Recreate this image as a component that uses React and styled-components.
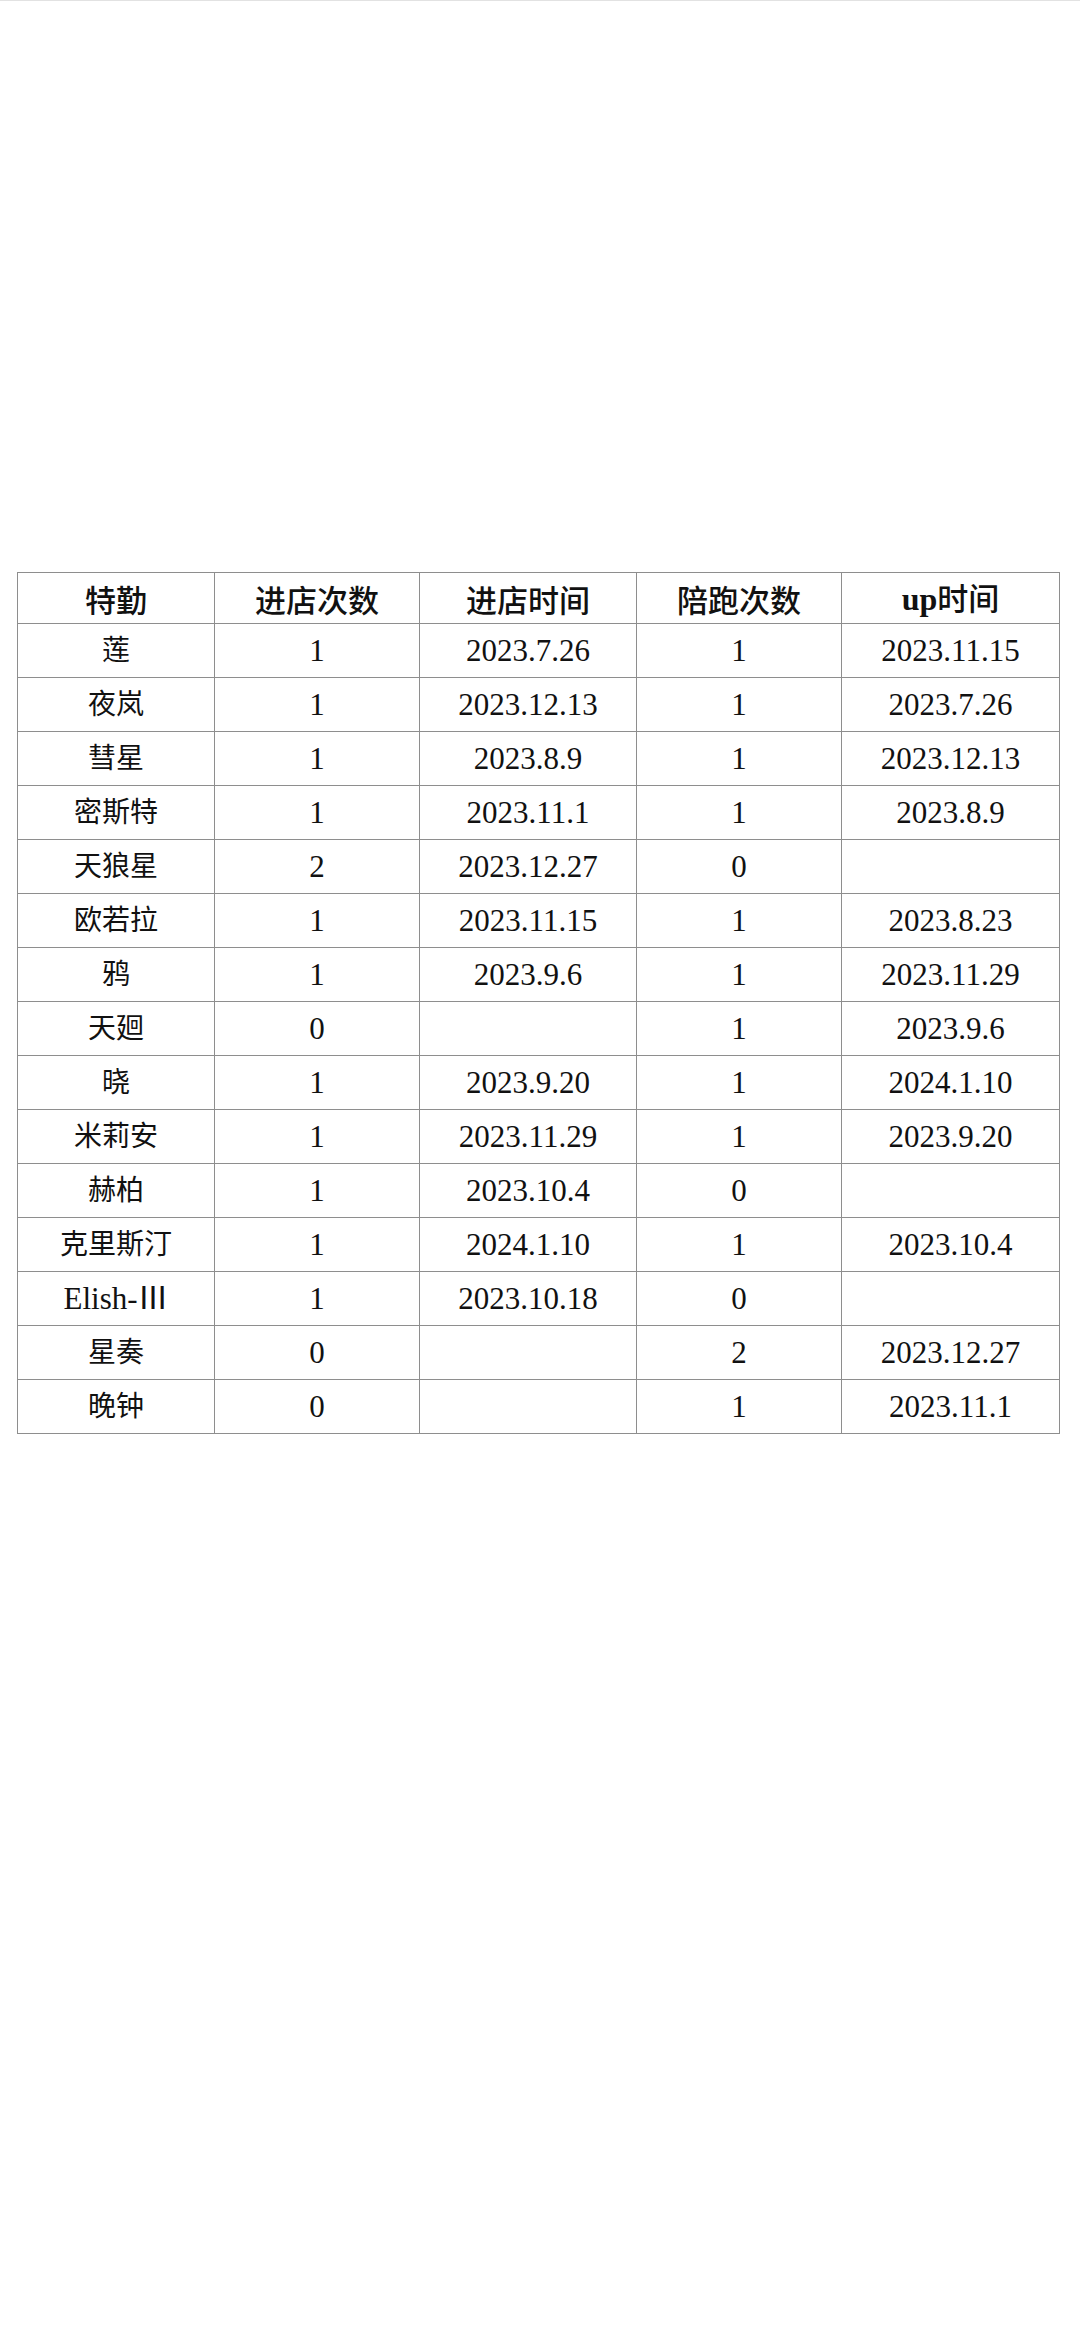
import React from "react";
import styled, { createGlobalStyle } from "styled-components";

const GlobalStyle = createGlobalStyle`
  html, body {
    margin: 0;
    padding: 0;
    background: #ffffff;
  }
  body {
    font-family: "Liberation Serif", "Noto Sans CJK SC", serif;
    color: #111;
  }
`;

const Page = styled.div`
  width: 1080px;
  min-height: 2340px;
  box-sizing: border-box;
  border-top: 1px solid #e2e2e2;
  padding: 571px 0 0 17px;
`;

const Sheet = styled.table`
  border-collapse: collapse;
  table-layout: fixed;
  width: 1042px;
  border: 1px solid #8e8e8e;
`;

const Col = styled.col`
  width: ${(p) => p.$w}px;
`;

const HeadRow = styled.tr`
  height: 51px;
`;

const Row = styled.tr`
  height: 54px;
`;

const HeadCell = styled.th`
  border: 1px solid #8e8e8e;
  padding: 0;
  text-align: center;
  vertical-align: middle;
  font-size: 31px;
  font-weight: 500;
  line-height: 1;
  font-family: "Noto Sans CJK SC", sans-serif;
`;

const Latin = styled.span`
  font-family: "Liberation Serif", serif;
  font-weight: 700;
  font-size: 32px;
`;

const Cell = styled.td`
  border: 1px solid #8e8e8e;
  padding: 0;
  text-align: center;
  vertical-align: middle;
  font-size: ${(p) => (p.$latin ? 31 : 28)}px;
  font-weight: 400;
  line-height: 1;
`;

const widths = [197, 205, 217, 205, 218];
const headers = [["", "特勤"], ["", "进店次数"], ["", "进店时间"], ["", "陪跑次数"], ["up", "时间"]];

const rows = [
  ["莲", "1", "2023.7.26", "1", "2023.11.15"],
  ["夜岚", "1", "2023.12.13", "1", "2023.7.26"],
  ["彗星", "1", "2023.8.9", "1", "2023.12.13"],
  ["密斯特", "1", "2023.11.1", "1", "2023.8.9"],
  ["天狼星", "2", "2023.12.27", "0", ""],
  ["欧若拉", "1", "2023.11.15", "1", "2023.8.23"],
  ["鸦", "1", "2023.9.6", "1", "2023.11.29"],
  ["天廻", "0", "", "1", "2023.9.6"],
  ["晓", "1", "2023.9.20", "1", "2024.1.10"],
  ["米莉安", "1", "2023.11.29", "1", "2023.9.20"],
  ["赫柏", "1", "2023.10.4", "0", ""],
  ["克里斯汀", "1", "2024.1.10", "1", "2023.10.4"],
  ["Elish-Ⅲ", "1", "2023.10.18", "0", ""],
  ["星奏", "0", "", "2", "2023.12.27"],
  ["晚钟", "0", "", "1", "2023.11.1"],
];

const isLatin = (s) => /^[\x00-\x7F]/.test(s);

const App = () => {
  return (
    <>
      <GlobalStyle />
      <Page>
        <Sheet>
          <colgroup>
            {widths.map((w, i) => (
              <Col key={i} $w={w} />
            ))}
          </colgroup>
          <thead>
            <HeadRow>
              {headers.map(([en, zh]) => (
                <HeadCell key={zh + en}>
                  {en && <Latin>{en}</Latin>}
                  {zh}
                </HeadCell>
              ))}
            </HeadRow>
          </thead>
          <tbody>
            {rows.map((r, i) => (
              <Row key={i}>
                {r.map((c, j) => (
                  <Cell key={j} $latin={isLatin(c)}>
                    {c}
                  </Cell>
                ))}
              </Row>
            ))}
          </tbody>
        </Sheet>
      </Page>
    </>
  );
};

export default App;
